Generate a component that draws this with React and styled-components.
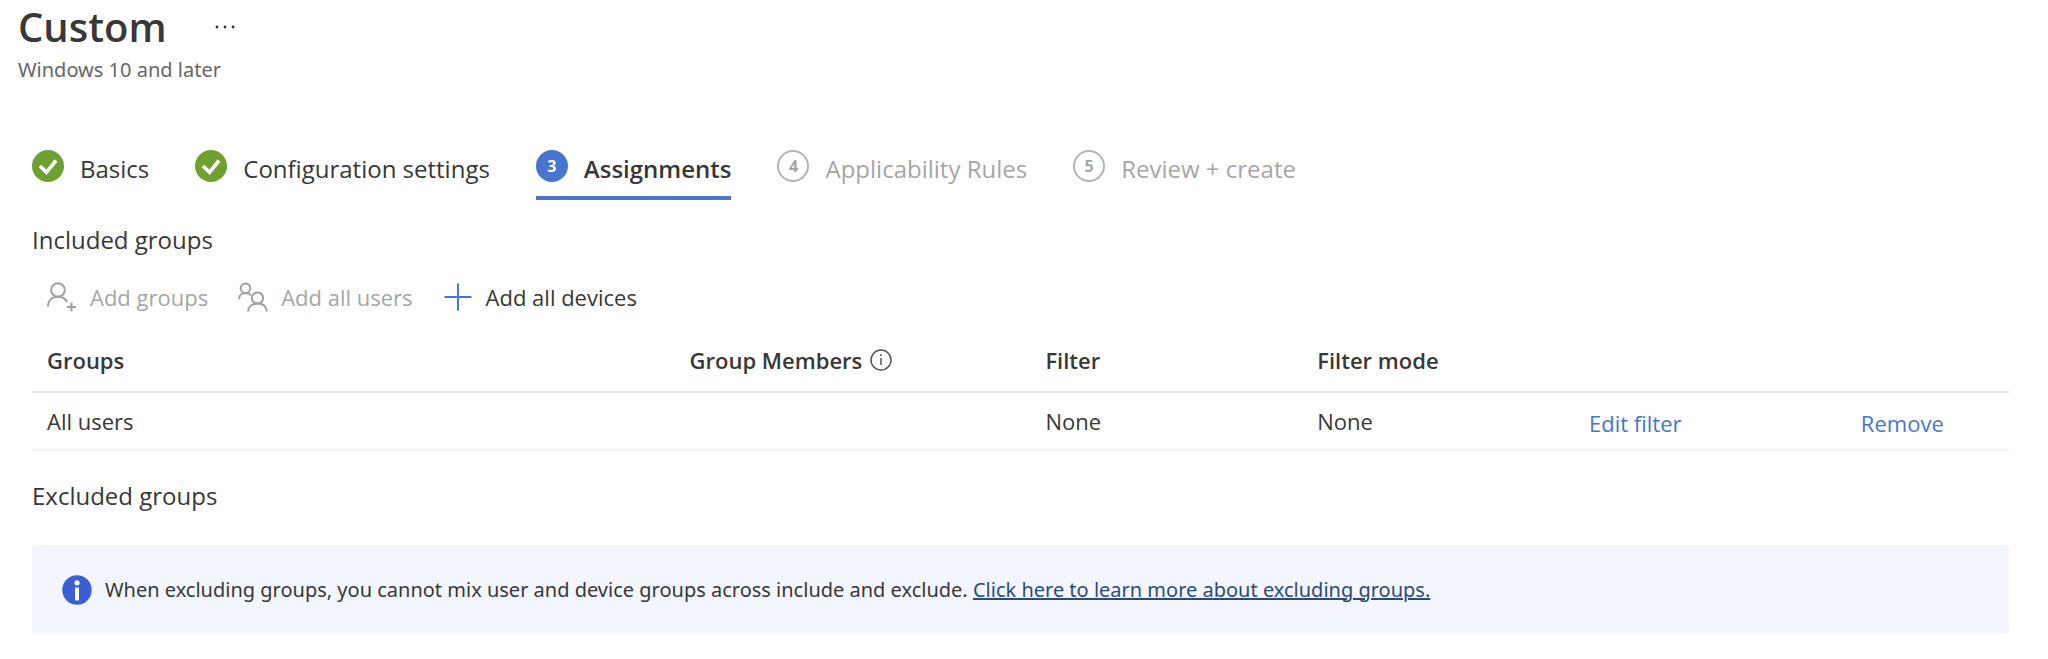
import React from 'react';
import styled, { createGlobalStyle } from 'styled-components';

const steps = [
   { label: 'Basics', status: 'done' },
   { label: 'Configuration settings', status: 'done' },
   { label: 'Assignments', status: 'active' },
   { label: 'Applicability Rules', status: 'todo' },
   { label: 'Review + create', status: 'todo' },
];

const rows = [{ group: 'All users', members: '', filter: 'None', mode: 'None' }];

const AddUserIcon = () => (
   <Icon viewBox="0 0 30 30" aria-hidden="true">
      <circle cx="11" cy="8" r="6.8" />
      <path d="M1 24.5C1 18.5 5 14.8 11 14.8c4.5 0 7.6 2 9.2 5.4M20 25h9M24.5 20.5v9" />
   </Icon>
);

const UsersIcon = () => (
   <Icon viewBox="0 0 30 30" aria-hidden="true">
      <circle cx="7.5" cy="6.2" r="4.8" />
      <path d="M1 17.3C1 13.5 3.5 11 7.5 11c2.3 0 4.2.8 5.5 2.3" />
      <circle cx="19.5" cy="16" r="5.6" />
      <path d="M10 29.5c.3-5 4-7.9 9.5-7.9s9 2.9 9.3 7.9" />
   </Icon>
);

const PlusIcon = () => (
   <Icon viewBox="0 0 30 30" color="#4676d0" aria-hidden="true">
      <path d="M1.5 15h27M15 1.5v27" />
   </Icon>
);

const CheckIcon = () => (
   <svg width="32" height="32" viewBox="0 0 32 32" aria-hidden="true">
      <circle cx="16" cy="16" r="16" fill="#6fa032" />
      <path
         d="M8 16l6.5 6.3L24 10.5"
         fill="none"
         stroke="#fff"
         strokeWidth="3.6"
      />
   </svg>
);

const InfoOutlineIcon = () => (
   <svg width="22" height="22" viewBox="0 0 22 22" role="img" aria-label="Info">
      <circle cx="11" cy="11" r="10" fill="none" stroke="#555" strokeWidth="1.5" />
      <path d="M11 9v7" stroke="#555" strokeWidth="1.5" />
      <circle cx="11" cy="6.3" r="1" fill="#555" />
   </svg>
);

const InfoIcon = () => (
   <svg width="30" height="30" viewBox="0 0 30 30" aria-hidden="true">
      <circle cx="15" cy="15" r="14.7" fill="#3b5fd3" />
      <circle cx="15" cy="7.8" r="2.6" fill="#fff" />
      <rect x="13" y="12.6" width="4" height="13" rx="1" fill="#fff" />
   </svg>
);

const App = () => (
   <>
      <GlobalStyle />
      <Header>
         <TitleRow>
            <Title>Custom</Title>
            <MoreButton aria-label="More options">
               <svg width="20" height="4" viewBox="0 0 20 4" fill="#333">
                  <circle cx="2" cy="2" r="1.4" />
                  <circle cx="10" cy="2" r="1.4" />
                  <circle cx="18" cy="2" r="1.4" />
               </svg>
            </MoreButton>
         </TitleRow>
         <Subtitle>Windows 10 and later</Subtitle>
      </Header>
      <Main>
         <Steps>
            {steps.map(({ label, status }, index) => (
               <Step key={label} $status={status} disabled={status === 'todo'}>
                  {status === 'done' ? (
                     <CheckIcon />
                  ) : (
                     <StepNumber $status={status}>{index + 1}</StepNumber>
                  )}
                  <StepLabel>{label}</StepLabel>
               </Step>
            ))}
         </Steps>

         <SectionTitle>Included groups</SectionTitle>
         <Toolbar>
            <ToolButton disabled>
               <AddUserIcon />
               Add groups
            </ToolButton>
            <ToolButton disabled>
               <UsersIcon />
               Add all users
            </ToolButton>
            <ToolButton>
               <PlusIcon />
               Add all devices
            </ToolButton>
         </Toolbar>

         <Table>
            <colgroup>
               <Col $width="32.5%" />
               <Col $width="18%" />
               <Col $width="13.75%" />
               <Col $width="13.75%" />
               <Col $width="13.75%" />
               <Col />
            </colgroup>
            <thead>
               <tr>
                  <HeadCell>Groups</HeadCell>
                  <HeadCell>
                     <HeadLabel>
                        Group Members
                        <InfoOutlineIcon />
                     </HeadLabel>
                  </HeadCell>
                  <HeadCell>Filter</HeadCell>
                  <HeadCell>Filter mode</HeadCell>
                  <HeadCell />
                  <HeadCell />
               </tr>
            </thead>
            <tbody>
               {rows.map(({ group, members, filter, mode }) => (
                  <tr key={group}>
                     <Cell>{group}</Cell>
                     <Cell>{members}</Cell>
                     <Cell>{filter}</Cell>
                     <Cell>{mode}</Cell>
                     <ActionCell>
                        <ActionLink href="#edit">Edit filter</ActionLink>
                     </ActionCell>
                     <ActionCell>
                        <ActionLink href="#remove">Remove</ActionLink>
                     </ActionCell>
                  </tr>
               ))}
            </tbody>
         </Table>

         <SectionTitle>Excluded groups</SectionTitle>
         <Banner>
            <InfoIcon />
            <p>
               When excluding groups, you cannot mix user and device groups across
               include and exclude.{' '}
               <BannerLink href="#learn-more">
                  Click here to learn more about excluding groups.
               </BannerLink>
            </p>
         </Banner>
      </Main>
   </>
);

export default App;

const GlobalStyle = createGlobalStyle`
   * {
      box-sizing: border-box;
      margin: 0;
      padding: 0;
   }

   body {
      background: #fff;
      color: #383838;
      font-family: 'Segoe UI', 'Open Sans', sans-serif;
      font-size: 24px;
      line-height: 32px;
   }

   button {
      border: 0;
      background: none;
      color: inherit;
      font: inherit;
      cursor: pointer;
   }

   svg {
      flex: none;
   }
`;

const Header = styled.header`
   padding: 0 18px;
`;

const TitleRow = styled.div`
   display: flex;
   align-items: center;
   gap: 48px;
`;

const Title = styled.h1`
   font-size: 40px;
   font-weight: 600;
   line-height: 54px;
`;

const MoreButton = styled.button`
   display: flex;
`;

const Subtitle = styled.p`
   color: #666;
   font-family: 'Segoe UI', 'Noto Sans', sans-serif;
   font-size: 20px;
`;

const Main = styled.main`
   padding: 64px 39px 24px 32px;
`;

const Steps = styled.nav`
   display: flex;
   gap: 46px;
`;

const Step = styled.button`
   display: flex;
   gap: 16px;
   height: 50px;
   border-bottom: 4px solid
      ${({ $status }) => ($status === 'active' ? '#4676d0' : 'transparent')};
   color: ${({ $status }) => ($status === 'todo' ? '#a6a6a6' : '#383838')};
   font-weight: ${({ $status }) => ($status === 'active' ? 600 : 400)};
`;

const StepLabel = styled.span`
   padding-top: 3px;
   white-space: nowrap;
`;

const StepNumber = styled.span`
   display: flex;
   flex: none;
   align-items: center;
   justify-content: center;
   width: 32px;
   height: 32px;
   border: 2px solid ${({ $status }) => ($status === 'active' ? '#4676d0' : '#b3b3b3')};
   border-radius: 50%;
   background: ${({ $status }) => ($status === 'active' ? '#4676d0' : '#fff')};
   color: ${({ $status }) => ($status === 'active' ? '#fff' : '#a6a6a6')};
   font-size: 16px;
   font-weight: 700;
`;

const SectionTitle = styled.h2`
   margin-top: 24px;
   font-size: 24px;
   font-weight: 400;
`;

const Toolbar = styled.div`
   display: flex;
   gap: 30px;
   margin-top: 25px;
   padding-left: 15px;
   font-size: 22px;
`;

const ToolButton = styled.button`
   display: flex;
   align-items: center;
   gap: 13px;

   &:disabled {
      color: #a6a6a6;
      cursor: default;
   }
`;

const Icon = styled.svg`
   width: 30px;
   height: 30px;
   fill: none;
   stroke: ${({ color }) => color || '#a0a0a0'};
   stroke-width: 2;
`;

const Table = styled.table`
   width: 100%;
   margin: 15px 0 29px;
   border-collapse: collapse;
   table-layout: fixed;
   font-size: 22px;
`;

const Col = styled.col`
   width: ${({ $width }) => $width || 'auto'};
`;

const HeadCell = styled.th`
   height: 64px;
   padding: 0 15px;
   border-bottom: 2px solid #e6e6e6;
   font-weight: 600;
   text-align: left;
`;

const HeadLabel = styled.span`
   display: flex;
   align-items: center;
   gap: 8px;
   white-space: nowrap;
`;

const Cell = styled.td`
   height: 58px;
   padding: 0 15px;
   border-bottom: 2px solid #f4f4f4;
`;

const ActionCell = styled(Cell)`
   padding-top: 4px;
`;

const ActionLink = styled.a`
   color: #4676d0;
   text-decoration: none;
`;

const Banner = styled.div`
   display: flex;
   align-items: center;
   gap: 13px;
   min-height: 89px;
   margin-top: 33px;
   padding: 0 30px;
   border-radius: 4px;
   background: #f3f6ff;
   font-family: 'Segoe UI', 'Noto Sans', sans-serif;
   font-size: 20px;
`;

const BannerLink = styled.a`
   color: #2b4a7c;
   text-decoration-thickness: 2px;
`;
